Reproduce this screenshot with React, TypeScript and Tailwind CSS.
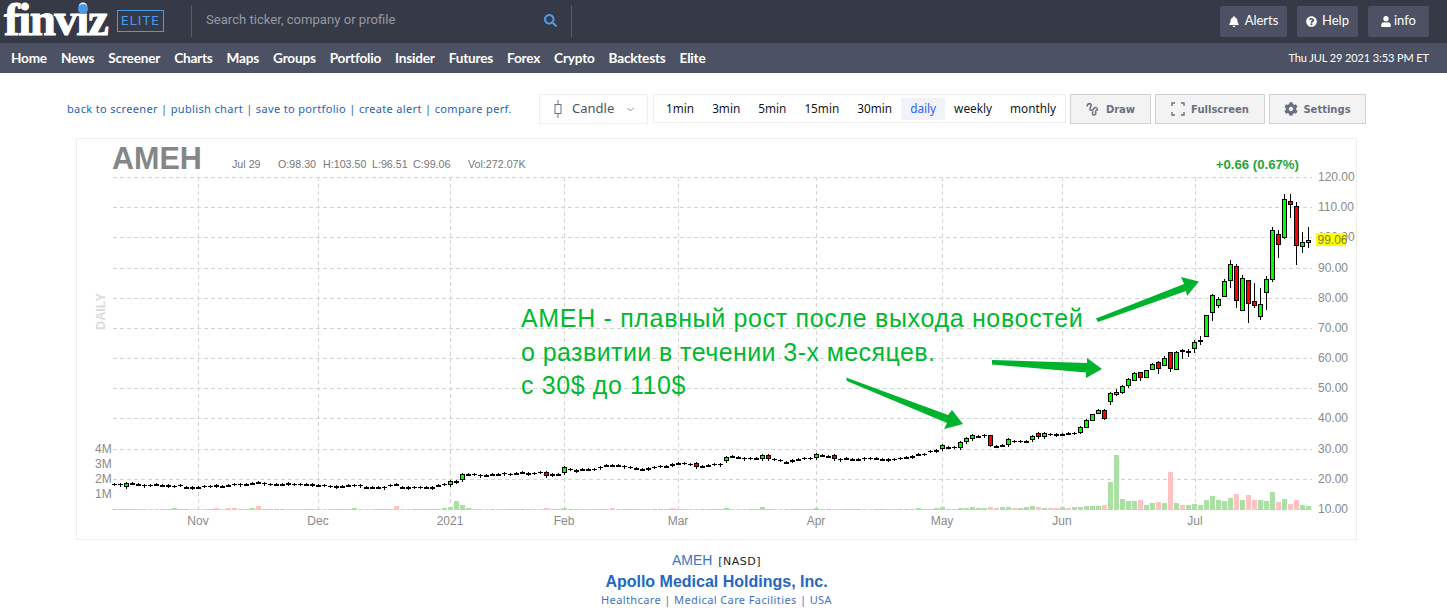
import React from "react";
import { FaBell, FaQuestionCircle, FaUser, FaCog, FaSearch } from "react-icons/fa";
import { ChevronDown } from "lucide-react";

const navItems = ["Home", "News", "Screener", "Charts", "Maps", "Groups", "Portfolio", "Insider", "Futures", "Forex", "Crypto", "Backtests", "Elite"];
const intervals = ["1min", "3min", "5min", "15min", "30min", "daily", "weekly", "monthly"];
const toolLinks = ["back to screener", "publish chart", "save to portfolio", "create alert", "compare perf."];

// chart pixels are relative to the page, the svg is shifted by the card origin
const CARD_X = 76;
const CARD_Y = 138;

const candleX = (i: number) => 114 + 6 * i;

type Row = [number, number, number, number, "g" | "r"];

// candle centre y for the slow part of the chart (i = 0..160)
const flat = [
  484, 484.3, 485, 483.3, 483.7, 484.7, 484.7, 484.3, 484.7, 485.3, 485.7, 485.3, 487, 487, 487, 485.7, 485.7, 485, 486, 484.7,
  484.3, 484.3, 484.3, 482.7, 482.3, 483.3, 483.7, 484, 483.7, 483.3, 483.7, 484, 483.7, 484, 484.7, 485.3, 485.7, 486, 485.7, 485.3,
  484.7, 485.3, 486.7, 486.7, 486.7, 486.7, 485.3, 484, 486.7, 486.7, 486.7, 486.7, 486.7, 486.7, 485.3, 484.3, 482.7, 481, 477.3, 473.7,
  474.3, 475.3, 474.7, 474.3, 474.3, 473.3, 473.7, 473, 472.3, 472.7, 473, 472.3, 473.7, 474.3, 474, 470.3, 469.3, 469.7, 469, 468.7,
  468.7, 466.7, 464.7, 465, 465.3, 466, 467.3, 468, 468.7, 467.7, 467, 465.7, 465.7, 464.3, 463.3, 462.7, 464, 465.3, 465.7, 465,
  464, 463.7, 459, 456, 457, 458.3, 458.3, 458, 457.3, 457.3, 459.3, 460.3, 461.7, 460, 459, 458, 457.7, 456.3, 455.3, 455.7, 457.3, 459.3,
  458.3, 458.7, 459.3, 458.3, 457.7, 458, 459.3, 459.3, 458.7, 458.3, 456.7, 455.7, 454, 453.7, 451, 450, 447.3, 446.7, 447, 445,
  440, 436.7, 436, 435, 440.3, 445.7, 445.3, 442, 440.7, 441, 440.7, 438, 435.3, 435.3, 434.3, 434, 433.7, 433.3, 433.3, 431.7,
];

const greens = new Set([2, 56, 58, 75, 102, 108, 117, 138, 141, 142, 143, 149, 153, 155]);
const reds = new Set([72, 97, 109, 120, 154]);
const bigBody = new Set([58, 75, 141, 149]);

// i = 146, the tall red one in May
const mayRed: Row = [435.5, 445.5, 435, 447, "r"];

const steep: Row[] = [
  [427.5, 432.5, 426, 434, "g"],
  [420, 427, 419, 428, "g"],
  [414.5, 420, 414, 421, "g"],
  [410, 413.5, 409, 414, "g"],
  [410, 418.5, 409, 420, "r"],
  [393.5, 401.5, 392, 405, "g"],
  [392, 394.5, 389, 396, "g"],
  [386.5, 392, 385, 394, "g"],
  [379.5, 385, 378, 388, "g"],
  [373.5, 380.5, 372, 381, "g"],
  [372.5, 377.5, 372, 381, "r"],
  [370.5, 377, 370, 378, "g"],
  [364.5, 369.5, 363, 370, "g"],
  [362.5, 368.5, 361, 374, "r"],
  [358.5, 365.5, 356, 366, "g"],
  [352.5, 368.5, 352, 372, "r"],
  [352.5, 369.5, 351, 370, "g"],
];

const tall: Row = [342.5, 348.5, 340, 353, "g"];

const top: Row[] = [
  [315.5, 336.5, 315, 337, "g"],
  [295.5, 312.5, 294, 321, "g"],
  [299.5, 305.5, 297, 308, "g"],
  [281.5, 296.5, 279, 297, "g"],
  [264.5, 280.5, 260, 288, "g"],
  [266.5, 300.5, 264, 308, "r"],
  [278.5, 310.5, 275, 311, "g"],
  [280.5, 303.5, 280, 323, "r"],
  [301.5, 305.5, 283, 308, "r"],
  [304.5, 316.5, 288, 320, "g"],
  [279.5, 292.5, 276, 310, "g"],
  [230.5, 279.5, 227, 282, "g"],
  [234.5, 244.5, 230, 258, "r"],
  [199.5, 237.5, 194, 239, "g"],
  [201.5, 204.5, 194, 218, "r"],
  [206.5, 245.5, 202, 265, "r"],
  [242.5, 246.5, 232, 253, "g"],
  [240.5, 242.5, 227, 248, "g"],
];

const dojis: Record<number, [number, number, number]> = {
  178: [350, 349, 359],
  179: [350.5, 349, 357],
  181: [340, 336, 345],
};

function Candle({ i }: { i: number }) {
  const x = candleX(i);
  let row: Row | undefined;
  if (i === 146) row = mayRed;
  if (i >= 161 && i <= 177) row = steep[i - 161];
  if (i === 180) row = tall;
  if (i >= 182) row = top[i - 182];

  if (dojis[i]) {
    const [y, hi, lo] = dojis[i];
    return (
      <g>
        <rect x={x} y={hi} width={1} height={lo - hi} fill="#000" />
        <rect x={x - 2} y={Math.round(y)} width={5} height={2} fill="#000" />
      </g>
    );
  }

  if (row) {
    const [a, b, hi, lo, c] = row;
    return (
      <g>
        <rect x={x} y={hi} width={1} height={lo - hi} fill="#000" />
        <rect x={x - 1.5} y={a} width={4} height={b - a} fill={c === "g" ? "#00ff00" : "#ff0000"} stroke="#000" strokeWidth={1} />
      </g>
    );
  }

  const y = Math.round(flat[i]);
  if (greens.has(i) || reds.has(i)) {
    const h = bigBody.has(i) ? 3 : 2;
    return (
      <g>
        <rect x={x} y={y - h - 1} width={1} height={h * 2 + 3} fill="#000" />
        <rect x={x - 1.5} y={y - h + 0.5} width={4} height={h * 2 - 1} fill={greens.has(i) ? "#00ff00" : "#ff0000"} stroke="#000" strokeWidth={1} />
      </g>
    );
  }
  return (
    <g>
      <rect x={x} y={y - 1} width={1} height={i % 4 === 1 ? 4 : 3} fill="#000" />
      <rect x={x - 2} y={y} width={5} height={i % 5 < 2 ? 1 : 2} fill="#000" />
    </g>
  );
}

const volEnd: [string, number][] = [
  ["g", 2], ["g", 3], ["g", 4], ["r", 3], ["g", 2], ["r", 2], ["r", 2], ["g", 3], ["r", 2], ["g", 3], ["g", 3], ["g", 4], ["g", 4], ["g", 4], ["r", 5], ["g", 28], ["g", 55],
  ["g", 11], ["g", 9], ["g", 9], ["r", 10], ["g", 5], ["g", 7], ["r", 8], ["g", 7], ["r", 38], ["g", 7], ["r", 5], ["g", 5], ["g", 6], ["g", 5], ["g", 10], ["g", 14],
  ["g", 10], ["g", 9], ["g", 12], ["r", 16], ["g", 10], ["r", 15], ["r", 10], ["g", 10], ["g", 9], ["g", 18], ["r", 8], ["g", 11], ["r", 6], ["r", 10], ["g", 5], ["g", 4],
];
const volEarly: Record<number, number> = {
  10: 2, 17: 2, 19: 2, 20: 2, 23: 2, 24: 4, 40: 2, 47: 4, 55: 2, 56: 3, 57: 9, 58: 5, 59: 2, 72: 2, 75: 2, 83: 2, 93: 2, 102: 2, 108: 3, 117: 2,
  134: 2, 137: 2, 138: 3, 141: 2, 142: 2, 143: 3, 144: 2, 145: 2, 146: 3, 147: 2, 148: 3, 149: 3, 150: 2,
};
const volRed = new Set([4, 5, 6, 7, 8, 13, 14, 15, 17, 18, 19, 20, 24, 29, 30, 31, 34, 35, 36, 41, 42, 43, 47, 48, 49, 60, 61, 62, 64, 65, 70, 71, 72, 78, 79, 80, 83, 84, 88, 89, 93, 96, 97, 103, 104, 105, 110, 111, 112, 120, 121, 125, 126, 129, 130, 146, 147, 150]);

function Volume({ i }: { i: number }) {
  const x = candleX(i);
  const [c, h] = i >= 151 ? volEnd[i - 151] : [volRed.has(i) ? "r" : "g", volEarly[i] ?? 1];
  return <rect x={x - 2} y={510 - h} width={5} height={h} fill={c === "g" ? "#abe0a4" : "#ffc2c2"} />;
}

const priceLabels = ["120.00", "110.00", "100.00", "90.00", "80.00", "70.00", "60.00", "50.00", "40.00", "30.00", "20.00", "10.00"];
const gridY = [177, 207, 237, 268, 298, 328, 358, 388, 418, 449, 479, 509];
const monthX: [string, number][] = [["Nov", 198], ["Dec", 318], ["2021", 450], ["Feb", 564], ["Mar", 678], ["Apr", 816], ["May", 942], ["Jun", 1062], ["Jul", 1195]];

const Chart = () => {
  return (
    <svg width={1279} height={400} viewBox={`${CARD_X + 1} ${CARD_Y + 1} 1279 400`} className="block" style={{ fontFamily: "'Liberation Sans', Arial, sans-serif" }}>
      <text x={112} y={169} fontSize={30.5} fontWeight={700} fill="#868686">AMEH</text>
      <g fontSize={10.7} fill="#777">
        <text x={232} y={168}>Jul 29</text>
        <text x={278} y={168}>O:98.30</text>
        <text x={323} y={168}>H:103.50</text>
        <text x={372} y={168}>L:96.51</text>
        <text x={413} y={168}>C:99.06</text>
        <text x={468} y={168}>Vol:272.07K</text>
      </g>
      <text x={1299} y={169} fontSize={13.2} fontWeight={700} fill="#1fa53a" textAnchor="end">+0.66 (0.67%)</text>

      <g stroke="#d4d4d4" strokeWidth={1} strokeDasharray="4 3" shapeRendering="crispEdges">
        {gridY.map((y) => <line key={y} x1={113} x2={1312} y1={y + 0.5} y2={y + 0.5} />)}
        {monthX.map(([m, x]) => <line key={m} x1={x + 0.5} x2={x + 0.5} y1={177} y2={510} />)}
      </g>

      <g shapeRendering="crispEdges">
        {Array.from({ length: 200 }, (_, i) => <Volume key={i} i={i} />)}
        {Array.from({ length: 200 }, (_, i) => <Candle key={i} i={i} />)}
      </g>

      <g fontSize={12} fill="#8a8a8a" fontWeight={500}>
        {priceLabels.map((p, k) => <text key={p} x={1318} y={gridY[k] + 4}>{p}</text>)}
        <text x={95} y={453}>4M</text>
        <text x={95} y={468}>3M</text>
        <text x={95} y={483}>2M</text>
        <text x={95} y={498}>1M</text>
        {monthX.map(([m, x]) => <text key={m} x={x} y={525} textAnchor="middle">{m}</text>)}
      </g>
      <rect x={1316} y={233} width={30} height={13} fill="#ffff00" />
      <text x={1317.5} y={243.5} fontSize={12} fill="#80803a">99.06</text>

      <text transform="translate(104.5 330) rotate(-90)" fontSize={12.7} fontWeight={700} fill="#dcdcdc">DAILY</text>

      {/* hand drawn arrows */}
      <g fill="#00b32c">
        <polygon points="1096,318.5 1184,284 1181,277 1199,281.5 1187,296 1186,291 1098,322" />
        <polygon points="992,360 1087,363 1087,358 1102,369 1086,378 1086,372.5 992,364.5" />
        <polygon points="846,377.5 948,415 952,410 963,424 944,429 947,423 847,381" />
      </g>
    </svg>
  );
};

const App = () => {
  return (
    <div className="w-[1447px] h-[615px] overflow-hidden bg-white font-['Lato','Liberation_Sans',sans-serif]">
      {/* Top bar */}
      <div className="h-[43px] pb-[1px] bg-[#363a46] flex items-center">
        <div className="relative w-[109px] ml-[4px] h-[42px]">
          <span className="absolute left-0 top-0 font-['Liberation_Serif',serif] font-bold text-[47px] leading-[38px] tracking-[-1.5px] text-white [-webkit-text-stroke:1px_white]">finviz</span>
          <span className="absolute left-[74px] top-[4px] w-[10px] h-[10px] rounded-full bg-[#4a9ae8]" />
        </div>
        <div className="ml-[4px] w-[47px] h-[22px] border border-[#4a9ae8] flex items-center justify-center text-[#4a9ae8] text-[13px] tracking-[1.2px] font-['Roboto',sans-serif]">ELITE</div>
        <div className="ml-[27px] w-px h-[32px] bg-[#565b6a]" />
        <div className="ml-[14px] w-[338px] mb-[3px] text-[#9499a5] text-[13.1px] font-['Roboto',sans-serif]">Search ticker, company or profile</div>
        <FaSearch className="text-[#4a9ae8] w-[13px] h-[13px] mb-[1px]" />
        <div className="ml-[14px] w-px h-[32px] bg-[#565b6a]" />
        <div className="ml-auto mr-[18px] flex gap-[10px] text-[13px] text-white">
          <div className="w-[67px] h-[31px] rounded-[2px] bg-[#4c5263] flex items-center justify-center gap-[6px]"><FaBell className="w-[10px] h-[11px]" />Alerts</div>
          <div className="w-[61px] h-[31px] rounded-[2px] bg-[#4c5263] flex items-center justify-center gap-[5px]"><FaQuestionCircle className="w-[11px] h-[11px]" />Help</div>
          <div className="w-[61px] h-[31px] rounded-[2px] bg-[#4c5263] flex items-center justify-center gap-[3px]"><FaUser className="w-[10px] h-[11px]" />info</div>
        </div>
      </div>
      {/* Nav */}
      <div className="h-[30px] bg-[#4c5263] flex items-center pl-[11px] pr-[18px] text-white">
        <div className="flex gap-[14px] text-[13.6px] font-bold tracking-[-0.2px]">
          {navItems.map((n) => <span key={n}>{n}</span>)}
        </div>
        <div className="ml-auto text-[11px] tracking-[-0.1px]">Thu JUL 29 2021 3:53 PM ET</div>
      </div>

      {/* Toolbar */}
      <div className="flex items-start pt-[21px] h-[65px]">
        <div className="ml-[67px] w-[472px] mt-[7px] text-[11px] tracking-[0.35px] text-[#2863b0] font-['Noto_Sans',sans-serif] leading-[16px] whitespace-nowrap">
          {toolLinks.map((l, i) => (
            <span key={l}>{i > 0 && " | "}{l}</span>
          ))}
        </div>
        <div className="w-[109px] h-[30px] border border-[#eeeeee] flex items-center text-[13px] text-[#50535e] font-['Noto_Sans',sans-serif]">
          <svg width="10" height="20" viewBox="0 0 10 20" className="ml-[13px]" fill="none" stroke="#6b7080"><path d="M5 1v4M5 15v4" /><rect x="2" y="5.5" width="6" height="9" /></svg>
          <span className="ml-[9px]">Candle</span>
          <ChevronDown className="ml-[11px] w-[11px] h-[11px]" strokeWidth={1.5} />
        </div>
        <div className="ml-[5px] w-[413px] h-[29px] border border-[#eeeeee] flex items-center pl-[3px] text-[11.8px] text-[#131722] font-['Noto_Sans',sans-serif]">
          {intervals.map((t) => (
            <span key={t} className={t === "daily" ? "h-[22px] px-[9px] flex items-center bg-[#f0f3fa] text-[#2962ff]" : "h-[22px] px-[9px] flex items-center"}>{t}</span>
          ))}
        </div>
        <div className="ml-[4px] flex gap-[4px] text-[10px] font-bold text-[#6b7080] font-['DejaVu_Sans',sans-serif]">
          <div className="w-[81px] h-[30px] bg-[#f3f3f3] border border-[#cfd1d8] flex items-center justify-center gap-[6px]">
            <svg width="14" height="16" viewBox="0 0 14 14" fill="none" stroke="#6b7080" strokeWidth="1.5"><path d="M1.5 4.5C.5 2.5 3.5.5 5 2.5 6 4 3.5 5.5 4 7.5 4.5 9 7 8 8 6.5c1-1.5 3-1 3.3.5.3 1.3-1 2-2 1.5M7.5 9.5c-1.5.5-1.5 3.5.5 3.5s2.5-2.5 1-3.5" /></svg>
            Draw
          </div>
          <div className="w-[110px] h-[30px] bg-[#f3f3f3] border border-[#cfd1d8] flex items-center justify-center gap-[6px]">
            <svg width="14" height="14" viewBox="0 0 14 14" fill="none" stroke="#6b7080" strokeWidth="1.4"><path d="M1 4V1h3M10 1h3v3M13 10v3h-3M4 13H1v-3" /></svg>
            Fullscreen
          </div>
          <div className="w-[97px] h-[30px] bg-[#f3f3f3] border border-[#cfd1d8] flex items-center justify-center gap-[5px]">
            <FaCog className="w-[14px] h-[14px]" />
            Settings
          </div>
        </div>
      </div>

      {/* Chart card */}
      <div className="relative ml-[76px] w-[1281px] h-[402px] border border-[#eeeeee]">
        <Chart />
        <div className="absolute left-[444px] top-[163px] text-[25px] leading-[33.5px] text-[#00b92f] font-['Liberation_Sans',sans-serif] whitespace-nowrap">
          <div className="tracking-[0.67px]">АМЕН - плавный рост после выхода новостей</div>
          <div className="tracking-[0.42px]">о развитии в течении 3-х месяцев.</div>
          <div className="tracking-[0.6px]">с 30$ до 110$</div>
        </div>
      </div>

      {/* Company */}
      <div className="w-[1433px] mt-[11px] flex flex-col items-center font-['Liberation_Sans',sans-serif]">
        <div className="h-[18px] flex items-baseline gap-[6px] leading-[18px]">
          <span className="text-[14px] text-[#3a76c4]">AMEH</span>
          <span className="text-[11px] tracking-[0.5px] text-[#222] font-['DejaVu_Sans',sans-serif]">[NASD]</span>
        </div>
        <div className="mt-[3px] text-[16px] leading-[20px] font-bold text-[#2468c0]">Apollo Medical Holdings, Inc.</div>
        <div className="text-[11px] leading-[15px] tracking-[0.4px] text-[#3f72c2] font-['Noto_Sans',sans-serif]">Healthcare | Medical Care Facilities | USA</div>
      </div>
    </div>
  );
};

export default App;
